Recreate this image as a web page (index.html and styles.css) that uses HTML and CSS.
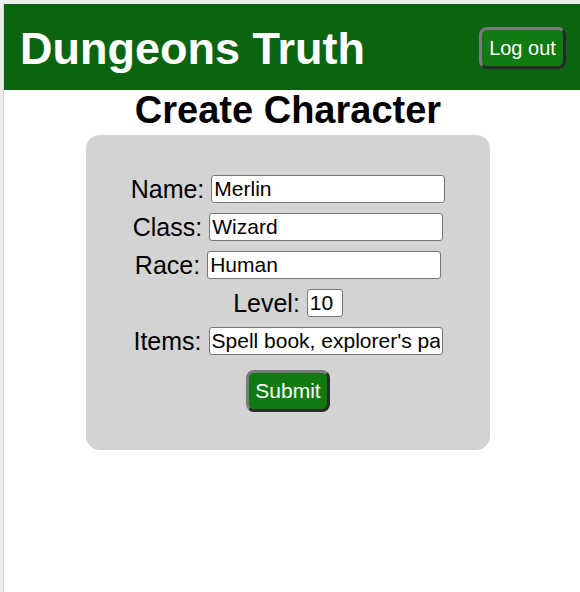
FILE: index.html
```html
<!DOCTYPE html>
<html>
<head>
<meta charset="utf-8">
<title>Dungeons Truth</title>
<link rel="stylesheet" href="styles.css">
</head>
<body>
<div class="frame">
  <div class="page">
    <header class="topbar">
      <h1 class="brand">Dungeons Truth</h1>
      <button class="btn logout" type="button">Log out</button>
    </header>
    <main class="main">
      <h2 class="title">Create Character</h2>
      <form class="card">
        <div class="row"><label class="label">Name:</label><input class="field" type="text" value="Merlin"></div>
        <div class="row"><label class="label">Class:</label><input class="field" type="text" value="Wizard"></div>
        <div class="row"><label class="label">Race:</label><input class="field" type="text" value="Human"></div>
        <div class="row"><label class="label">Level:</label><input class="field small" type="text" value="10"></div>
        <div class="row"><label class="label">Items:</label><input class="field" type="text" value="Spell book, explorer's pack"></div>
        <div class="row submit-row"><button class="btn submit" type="button">Submit</button></div>
      </form>
    </main>
  </div>
</div>
</body>
</html>
```

FILE: styles.css
```css
* { box-sizing: border-box; }
html, body { margin: 0; padding: 0; height: 100%; }
body {
  font-family: "Liberation Sans", Arial, Helvetica, sans-serif;
  background: #ececec;
}
.frame {
  padding: 4px 0 0 3px;
  min-height: 100%;
  display: flex;
}
.page {
  flex: 1;
  background: #ffffff;
  border-left: 1px solid #d4d4d4;
}
.topbar {
  height: 86px;
  background: #0b6410;
  display: flex;
  align-items: center;
  justify-content: space-between;
  padding: 0 14px 0 16px;
}
.brand {
  margin: 2px 0 0;
  color: #ffffff;
  font-size: 45px;
  font-weight: bold;
  line-height: 1;
}
.btn {
  font-family: "Liberation Sans", Arial, Helvetica, sans-serif;
  color: #ffffff;
  background: #117a11;
  border-style: solid;
  border-width: 3px;
  border-color: #7a7a7a #2a2a2a #2a2a2a #7a7a7a;
  border-radius: 8px;
  font-size: 20px;
  cursor: pointer;
}
.logout {
  width: 87px;
  height: 42px;
  padding: 0;
  margin-top: 2px;
}
.main {
  margin-right: 8px;
  display: flex;
  flex-direction: column;
  align-items: center;
}
.title {
  margin: 0;
  font-size: 38px;
  line-height: 40px;
  font-weight: bold;
  color: #000000;
}
.card {
  margin-top: 5px;
  width: 404px;
  background: #d3d3d3;
  border-radius: 14px;
  padding: 40px 0 38px;
  display: flex;
  flex-direction: column;
  align-items: center;
  gap: 10px;
}
.row {
  display: flex;
  align-items: center;
  justify-content: center;
  gap: 7px;
  height: 28px;
}
.label {
  font-size: 25px;
  color: #000000;
}
.field {
  width: 234px;
  height: 28px;
  font-family: "Liberation Sans", Arial, Helvetica, sans-serif;
  font-size: 21px;
  color: #000000;
  background: #ffffff;
  border: 1px solid #767676;
  border-radius: 3px;
  padding: 0 2px;
  outline: none;
}
.field.small {
  width: 36px;
}
.submit-row {
  height: 42px;
  margin-top: 5px;
}
.submit {
  width: 84px;
  height: 42px;
  padding: 0;
  font-size: 21px;
}
```
